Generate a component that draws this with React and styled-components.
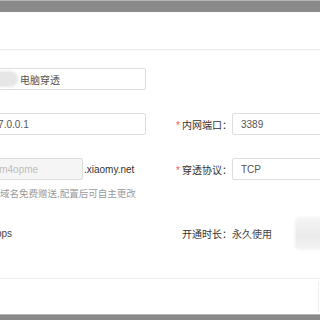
import React from 'react'
import styled, { createGlobalStyle } from 'styled-components'

const GlobalStyle = createGlobalStyle`
  html, body {
    margin: 0;
    padding: 0;
    background: #fff;
    overflow: hidden;
  }
  body {
    font-family: "Liberation Sans", "Noto Sans CJK SC", sans-serif;
  }
`

const Page = styled.div`
  width: 320px;
  height: 320px;
  overflow: hidden;
  display: flex;
  flex-direction: column;
`

const Mask = styled.div`
  flex-shrink: 0;
  height: ${(p) => p.h}px;
  background: #8a8a8a;
  border-top: 1px solid #b4b4b4;
  box-sizing: border-box;
`

const Modal = styled.div`
  width: 500px;
  margin-left: -126px;
  background: #fff;
  flex-shrink: 0;
`

const Header = styled.div`
  height: 37px;
  border-bottom: 1px solid #ededed;
  box-shadow: 0 1px 2px rgba(0, 0, 0, 0.03);
`

const Body = styled.div`
  padding: 18px 24px 34px;
  display: flex;
  flex-direction: column;
  gap: 23px;
`

const Row = styled.div`
  display: flex;
  align-items: center;
  height: 22px;
`

const Field = styled.div`
  display: flex;
  align-items: center;
  width: 248px;
  flex-shrink: 0;
`

const RightField = styled.div`
  display: flex;
  align-items: center;
  flex: 1;
  margin-left: 30px;
`

const Label = styled.label`
  width: ${(p) => p.w || 80}px;
  flex-shrink: 0;
  text-align: right;
  font-size: 10px;
  color: #333;
  white-space: nowrap;
`

const Star = styled.span`
  color: #f25c5c;
  margin-right: 2px;
`

const Input = styled.div`
  box-sizing: border-box;
  height: 22px;
  width: ${(p) => (p.w ? p.w + 'px' : 'auto')};
  flex: ${(p) => (p.w ? '0 0 auto' : '1')};
  border: 1px solid #dedede;
  border-radius: 2px;
  padding: 0 8px;
  display: flex;
  align-items: center;
  font-size: 10px;
  color: ${(p) => (p.disabled ? '#bdbdbd' : '#555')};
  background: ${(p) => (p.disabled ? '#f5f5f5' : '#fff')};
  white-space: nowrap;
  overflow: hidden;
`

const Redact = styled.span`
  display: inline-block;
  width: 31px;
  height: 16px;
  border-radius: 8px;
  background: #e6e6e6;
  filter: blur(1px);
  margin-right: 2px;
`

const Suffix = styled.span`
  font-size: 10px;
  color: #333;
  margin-left: 1px;
`

const Help = styled.div`
  margin: -16px 0 -2px 83px;
  font-size: 9.5px;
  line-height: 14px;
  color: #9a9a9a;
  white-space: nowrap;
`

const Value = styled.span`
  font-size: 10px;
  color: #444;
  padding-left: ${(p) => p.pad || 0}px;
  white-space: nowrap;
`

const Blur = styled.div`
  width: 40px;
  height: 33px;
  margin: -6px 0 -6px 23px;
  border-radius: 4px;
  background: linear-gradient(#f5f5f5 0%, #ededed 45%, #ebebeb 60%, #f5f5f5 100%);
  filter: blur(1px);
`

const Footer = styled.div`
  height: 35px;
  border-top: 1px solid #ececec;
  display: flex;
  align-items: center;
  padding-left: 444px;
`

const Button = styled.div`
  width: 60px;
  height: 30px;
  border-left: 1px solid #f0f0f0;
`

export default function App() {
  return (
    <Page>
      <GlobalStyle />
      <Mask h={12} />
      <Modal>
        <Header />
        <Body>
          <Row>
            <Field>
              <Label>穿透名称：</Label>
              <Input>
                <Redact />
                电脑穿透
              </Input>
            </Field>
          </Row>
          <Row>
            <Field>
              <Label>内网地址：</Label>
              <Input>127.0.0.1</Input>
            </Field>
            <RightField>
              <Label w={56}>
                <Star>*</Star>内网端口：
              </Label>
              <Input>3389</Input>
            </RightField>
          </Row>
          <Row>
            <Field>
              <Label>域名：</Label>
              <Input w={105} disabled>
                wxm4opme
              </Input>
              <Suffix>.xiaomy.net</Suffix>
            </Field>
            <RightField>
              <Label w={56}>
                <Star>*</Star>穿透协议：
              </Label>
              <Input>TCP</Input>
            </RightField>
          </Row>
          <Help>二级域名免费赠送,配置后可自主更改</Help>
          <Row>
            <Field>
              <Label>带宽：</Label>
              <Value pad={4}>2Mbps</Value>
            </Field>
            <RightField>
              <Label w={56}>开通时长：</Label>
              <Value>永久使用</Value>
              <Blur />
            </RightField>
          </Row>
        </Body>
        <Footer>
          <Button />
        </Footer>
      </Modal>
      <Mask h={8} />
    </Page>
  )
}
